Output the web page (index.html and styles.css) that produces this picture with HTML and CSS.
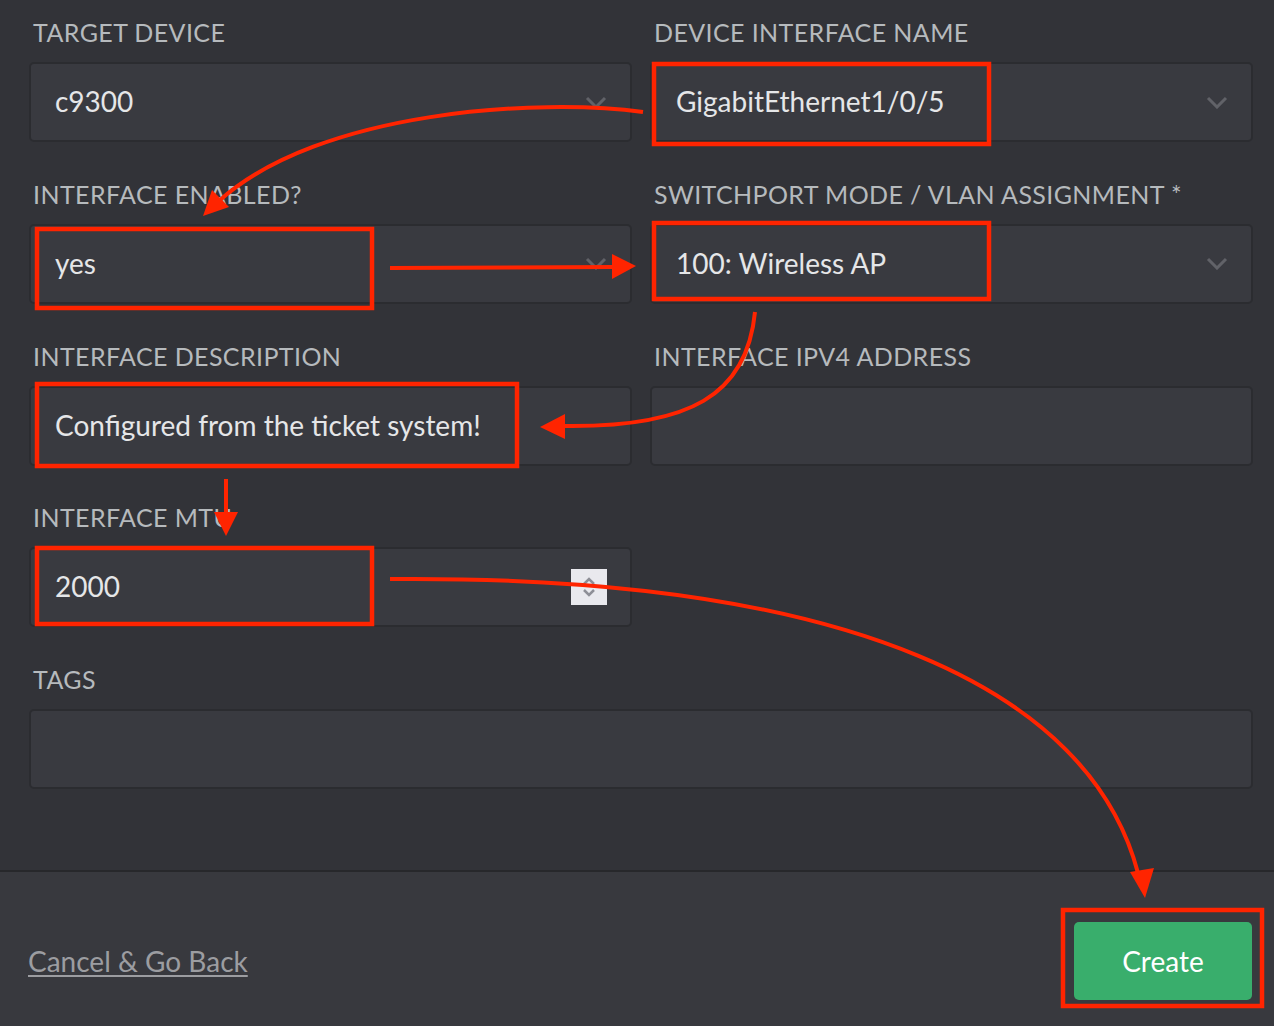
FILE: index.html
```html
<!DOCTYPE html>
<html lang="en">
<head>
<meta charset="utf-8">
<title>Create Interface</title>
<link rel="stylesheet" href="styles.css">
</head>
<body>
<div class="page">
  <form class="form">
    <div class="group">
      <label class="label">TARGET DEVICE</label>
      <div class="field">
        <span class="value">c9300</span>
        <svg class="chevron" width="22" height="13" viewBox="0 0 22 13"><polyline points="2,2 11,11 20,2"/></svg>
      </div>
    </div>
    <div class="group">
      <label class="label">DEVICE INTERFACE NAME</label>
      <div class="field">
        <span class="value">GigabitEthernet1/0/5</span>
        <svg class="chevron" width="22" height="13" viewBox="0 0 22 13"><polyline points="2,2 11,11 20,2"/></svg>
      </div>
    </div>
    <div class="group">
      <label class="label">INTERFACE ENABLED?</label>
      <div class="field">
        <span class="value">yes</span>
        <svg class="chevron" width="22" height="13" viewBox="0 0 22 13"><polyline points="2,2 11,11 20,2"/></svg>
      </div>
    </div>
    <div class="group">
      <label class="label">SWITCHPORT MODE / VLAN ASSIGNMENT *</label>
      <div class="field">
        <span class="value">100: Wireless AP</span>
        <svg class="chevron" width="22" height="13" viewBox="0 0 22 13"><polyline points="2,2 11,11 20,2"/></svg>
      </div>
    </div>
    <div class="group">
      <label class="label">INTERFACE DESCRIPTION</label>
      <div class="field">
        <span class="value">Configured from the ticket system!</span>
      </div>
    </div>
    <div class="group">
      <label class="label">INTERFACE IPV4 ADDRESS</label>
      <div class="field"></div>
    </div>
    <div class="group">
      <label class="label">INTERFACE MTU</label>
      <div class="field">
        <span class="value">2000</span>
        <span class="spinner">
          <svg width="16" height="26" viewBox="0 0 16 26"><polyline points="3,10 8,5 13,10"/><polyline points="3,16 8,21 13,16"/></svg>
        </span>
      </div>
    </div>
    <div class="group"></div>
    <div class="group wide">
      <label class="label">TAGS</label>
      <div class="field"></div>
    </div>
  </form>
  <footer class="footer">
    <a class="cancel" href="#">Cancel &amp; Go Back</a>
    <button class="create" type="button">Create</button>
  </footer>
  <svg class="annotations" width="1274" height="1026" viewBox="0 0 1274 1026">
    <g class="boxes">
      <rect x="654" y="64" width="335" height="80"/>
      <rect x="37" y="229" width="335" height="79"/>
      <rect x="654" y="223" width="335" height="76"/>
      <rect x="37" y="384" width="480" height="82"/>
      <rect x="37" y="548" width="335" height="76"/>
      <rect x="1063" y="910" width="199" height="96"/>
    </g>
    <g class="lines">
      <path d="M643 112 C540 98 320 110 219 201"/>
      <path d="M390 268 L614 267"/>
      <path d="M755 312 C747 395 690 428 562 426"/>
      <path d="M226 479 L226 514"/>
      <path d="M390 579 C850 575 1090 690 1138 873"/>
    </g>
    <g class="heads">
      <polygon points="203,216 212,190 229,207"/>
      <polygon points="636,266 612,254 612,279"/>
      <polygon points="540,427 565,414 565,439"/>
      <polygon points="226,536 214,512 238,512"/>
      <polygon points="1145,898 1130,872 1154,868"/>
    </g>
  </svg>
</div>
</body>
</html>
```
FILE: styles.css
```css
html, body {
  margin: 0;
  padding: 0;
}
body {
  background: #323338;
  font-family: "Lato", "Noto Sans", sans-serif;
  width: 1274px;
  height: 1026px;
  overflow: hidden;
}
.page {
  position: relative;
  width: 1274px;
  height: 1026px;
}
.form {
  display: grid;
  grid-template-columns: 1fr 1fr;
  column-gap: 18px;
  row-gap: 36.75px;
  padding: 17px 21px 81px 29px;
  margin: 0;
}
.group {
  display: flex;
  flex-direction: column;
  min-height: 125px;
}
.group.wide {
  grid-column: 1 / span 2;
}
.label {
  display: block;
  height: 30px;
  line-height: 30px;
  font-size: 25px;
  letter-spacing: 0.4px;
  color: #b6babd;
  padding-left: 4px;
  margin-bottom: 15px;
  white-space: nowrap;
}
.field {
  box-sizing: border-box;
  height: 80px;
  background: #393a40;
  border: 2px solid #2b2c30;
  border-radius: 5px;
  display: flex;
  align-items: center;
  padding: 0 23px 0 24px;
}
.value {
  flex: 1;
  font-size: 28px;
  line-height: 36px;
  margin-top: -2px;
  color: #e5e6e8;
  white-space: nowrap;
}
.chevron polyline {
  fill: none;
  stroke: #616268;
  stroke-width: 3;
}
.spinner {
  width: 36px;
  height: 36px;
  background: #e9e9ee;
  display: flex;
  align-items: center;
  justify-content: center;
}
.spinner polyline {
  fill: none;
  stroke: #8e8f97;
  stroke-width: 2.5;
}
.footer {
  box-sizing: border-box;
  height: 156px;
  border-top: 2px solid #27282b;
  background: #38393e;
  display: flex;
  align-items: flex-start;
  justify-content: space-between;
  padding: 50px 22px 0 28px;
}
.cancel {
  font-size: 28px;
  line-height: 78px;
  color: #9c9da1;
  text-decoration: underline;
  text-decoration-thickness: 2px;
  text-underline-offset: 3px;
}
.create {
  width: 178px;
  height: 78px;
  background: #39ae6c;
  color: #ffffff;
  border: none;
  border-radius: 5px;
  font-family: "Lato", "Noto Sans", sans-serif;
  font-size: 28px;
  padding: 0;
}
.annotations {
  position: absolute;
  top: 0;
  left: 0;
  pointer-events: none;
}
.annotations .boxes rect {
  fill: none;
  stroke: #ff2400;
  stroke-width: 4.5;
}
.annotations .lines path {
  fill: none;
  stroke: #ff2400;
  stroke-width: 4;
}
.annotations .heads polygon {
  fill: #ff2400;
}
```
